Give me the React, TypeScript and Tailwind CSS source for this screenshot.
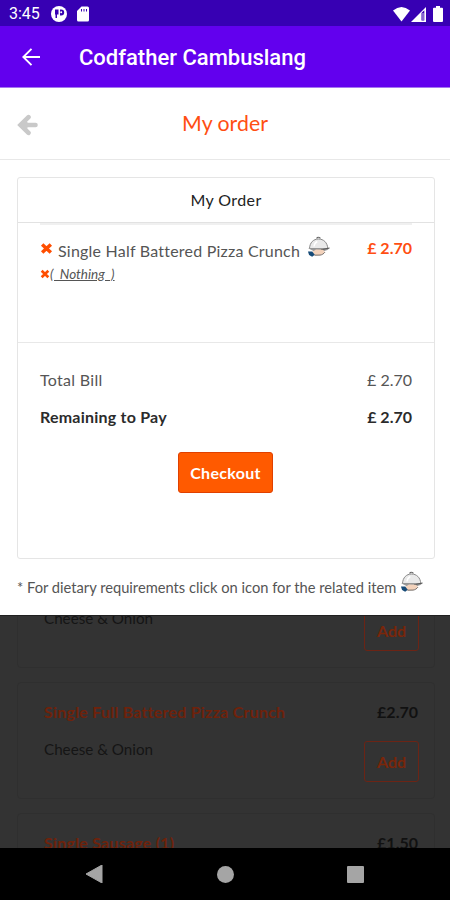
interface IMenuItem {
    id: number,
    name: string,
    description: string,
    price: string,
}

const menuItems: IMenuItem[] = [
    { id: 1, name: 'Single Half Battered Pizza Crunch', description: 'Cheese & Onion', price: '£2.70' },
    { id: 2, name: 'Single Full Battered Pizza Crunch', description: 'Cheese & Onion', price: '£2.70' },
    { id: 3, name: 'Single Sausage (1)', description: '', price: '£1.50' },
]

const ServingIcon = () => (
    <svg width="24" height="22" viewBox="0 0 24 22" fill="none">
        <path d="M2.500 12.500C2.800 6.500 6.500 3 11.500 3s8.900 3.500 9.300 9.500z" fill="#e9e9e9" stroke="#888" strokeWidth="1" />
        <path d="M9.800 2.500c0-1.700 3.400-1.700 3.400 0" stroke="#666" strokeWidth="1.200" />
        <path d="M7 10.500c.3-2.500 1.500-4.200 3.300-5" stroke="#fff" strokeWidth="1.400" />
        <path d="M1 12.300l21.500-.3-2 2-5.500 1.800H8z" fill="#999" />
        <path d="M14 13.800l8.500-1.800" stroke="#555" strokeWidth="1" />
        <path d="M5 16l4-2.600 7 .3c1.200.6.800 1.500-.3 1.700l2.300-.3c-1 2.300-3 3.800-5.500 4l-5.500.1z" fill="#f3d2bb" />
        <path d="M7.500 19.200l5.500-.1c2-.2 3.800-1.400 5-3" stroke="#665b55" strokeWidth="0.900" />
        <path d="M1 15.500l4.200 0 2.600 3.300-2.700 2-3-1.800z" fill="#174b78" />
    </svg>
)

const CrossIcon = ({ className }: { className: string }) => (
    <svg viewBox="0 0 12 12" className={className}>
        <path d="M2 2.200l8 7.600M10 2.200l-8 7.600" stroke="#ff4e00" strokeWidth="3.200" />
    </svg>
)

const StatusBar = () => (
    <div className="h-[26px] shrink-0 bg-[#3700b3] flex items-center justify-between pl-[9px] pr-[7px] text-white">
        <div className="flex items-center pt-[2px]">
            <span className="w-[42px] font-[Roboto,sans-serif] text-base leading-5">3:45</span>
            <svg width="16" height="16" viewBox="0 0 16 16">
                <circle cx="8" cy="8" r="8" fill="#fff" />
                <path d="M4 3.500h3.500v5H6V12H4.500V8.500H4zM9 3.500h1.200a3 3 0 0 1 0 6H9z" fill="#3700b3" />
                <circle cx="10.200" cy="6.300" r="1" fill="#fff" />
            </svg>
            <svg width="12" height="16" viewBox="0 0 12 16" className="ml-[10px]">
                <path d="M4.500.5h6q1.500 0 1.500 1.500v12q0 1.500-1.500 1.500h-9Q0 15.500 0 14V5z" fill="#fff" />
                <path d="M4.500 3v2.500M7 3v2.500M9.500 3v2.500" stroke="#3700b3" strokeWidth="1" />
            </svg>
        </div>
        <div className="flex items-center pt-[2px]">
            <svg width="17" height="15" viewBox="0 0 17 15">
                <path d="M0 3.500Q8.500-3.500 17 3.500L8.500 14.500z" fill="#fff" />
            </svg>
            <svg width="15" height="15" viewBox="0 0 15 15" className="ml-[1px]">
                <path d="M0 15L15 0V15z" fill="#fff" />
                <path d="M10.500 6l2.800-2.700v10.200h-2.800z" fill="#3700b3" />
                <path d="M12 6v7" stroke="#fff" strokeWidth="0.800" />
            </svg>
            <svg width="10" height="16" viewBox="0 0 10 16" className="ml-[7px]">
                <path d="M3 0h4v1.800h2q1 0 1 1V15q0 1-1 1H1q-1 0-1-1V2.800q0-1 1-1h2z" fill="#fff" />
            </svg>
        </div>
    </div>
)

const AppBar = () => (
    <div className="h-[62px] shrink-0 bg-[#6200ee] border-b border-[#a477f0] flex items-center pl-[22px] text-white">
        <svg width="18" height="18" viewBox="0 0 18 18" fill="none" stroke="#fff" strokeWidth="1.900">
            <path d="M18 9H1.500M9.500.8L1.300 9l8.200 8.200" />
        </svg>
        <h1 className="ml-[39px] pt-[3px] font-[Roboto,sans-serif] text-[22px] leading-7 font-medium whitespace-nowrap">Codfather Cambuslang</h1>
    </div>
)

const MenuCard = ({ item }: { item: IMenuItem }) => (
    <div className="h-[117px] shrink-0 border border-[#2f2f2f] rounded-sm pl-[26px] pr-[15px] pt-[17px]">
        <div className="flex justify-between font-bold leading-6">
            <span className="tracking-[0.22px] text-[#6f220b]">{item.name}</span>
            <span className="pr-px text-[#111]">{item.price}</span>
        </div>
        <div className="flex justify-between pt-[17px]">
            <span className="text-[15.200px] leading-4 text-[#151515]">{item.description}</span>
            <button className="w-[55px] h-[41px] border border-[#6c2415] rounded-[3px] text-[#7a260a] font-bold">Add</button>
        </div>
    </div>
)

const OrderSheet = () => (
    <div className="h-[527px] shrink-0 bg-white text-[#555]">
        <div className="h-[72px] border-b border-[#e8e8e8] grid grid-cols-[80px_1fr_80px] items-center">
            <svg width="21" height="22" viewBox="0 0 21 22" fill="none" stroke="#c9c9c9" strokeWidth="4.600" strokeLinecap="round" className="ml-[17px] mt-[2px]">
                <path d="M18.500 11H5" />
                <path d="M11.500 3.200L3.500 11l8 7.800" />
                <path d="M5 11l5-3v6z" fill="#c9c9c9" strokeWidth="1" />
            </svg>
            <h2 className="text-center text-[21.300px] text-[#ff4e12]">My order</h2>
        </div>

        <div className="ml-[17px] mr-[15px] mt-[17px] h-[382px] border border-[#e5e5e5] rounded-[3px]">
            <div className="h-[45px] border-b border-[#e2e2e2] text-center tracking-[0.4px] leading-[44px] text-[#222]">My Order</div>
            <div className="h-[119px] mx-[22px] border-t-2 border-[#f0f0f0]">
                <div className="flex items-center h-[47px]">
                    <CrossIcon className="size-[13px]" />
                    <span className="ml-[5px] pt-[5px] tracking-[0.22px] whitespace-nowrap">Single Half Battered Pizza Crunch</span>
                    <span className="ml-[7px] -mt-[3px]"><ServingIcon /></span>
                    <span className="ml-auto -mt-px font-bold text-[#ff4e12] whitespace-nowrap">£ 2.70</span>
                </div>
                <div className="flex items-center h-[4px]">
                    <CrossIcon className="size-[10px]" />
                    <span className="text-[13.500px] italic underline">(&nbsp; Nothing &nbsp;)</span>
                </div>
            </div>
            <div className="border-t border-[#e8e8e8] px-[22px] pt-[25px]">
                <div className="flex justify-between leading-6">
                    <span className="tracking-[0.3px]">Total Bill</span>
                    <span>£ 2.70</span>
                </div>
                <div className="flex justify-between leading-6 mt-[13px] font-bold text-[#2b2b2b]">
                    <span className="tracking-[0.22px]">Remaining to Pay</span>
                    <span>£ 2.70</span>
                </div>
                <div className="flex justify-center pt-[23px]">
                    <button className="w-[95px] h-[41px] mr-px bg-[#ff5a00] border border-[#e04000] rounded-[3px] tracking-[0.3px] text-white font-bold">Checkout</button>
                </div>
            </div>
        </div>

        <div className="flex items-center h-[24px] ml-[17px] mt-[11px]">
            <span className="text-[14.700px] leading-5 pt-[10px] whitespace-nowrap">* For dietary requirements click on icon for the related item</span>
            <span className="ml-[4px]"><ServingIcon /></span>
        </div>
    </div>
)

const NavBar = () => (
    <div className="h-[52px] shrink-0 bg-black flex items-center justify-between px-[86px]">
        <svg width="17" height="18" viewBox="0 0 17 18"><path d="M16 0v18L0 9z" fill="#a5a5a5" stroke="#a5a5a5" strokeLinejoin="round" /></svg>
        <div className="size-[17px] rounded-full bg-[#a5a5a5]"></div>
        <div className="size-[17px] rounded-[1px] bg-[#a5a5a5]"></div>
    </div>
)

const App = () => {
    return (
        <div className="w-[450px] h-[900px] flex flex-col overflow-hidden font-[Lato,sans-serif] text-base">
            <StatusBar />
            <AppBar />
            <OrderSheet />
            <div className="flex-1 min-h-0 overflow-hidden bg-[#333] border-t border-[#202020] pl-[17px] pr-[15px]">
                <div className="flex flex-col gap-[14px] -mt-[65px]">
                    {menuItems.map((item) => <MenuCard key={item.id} item={item} />)}
                </div>
            </div>
            <NavBar />
        </div>
    )
}

export default App
